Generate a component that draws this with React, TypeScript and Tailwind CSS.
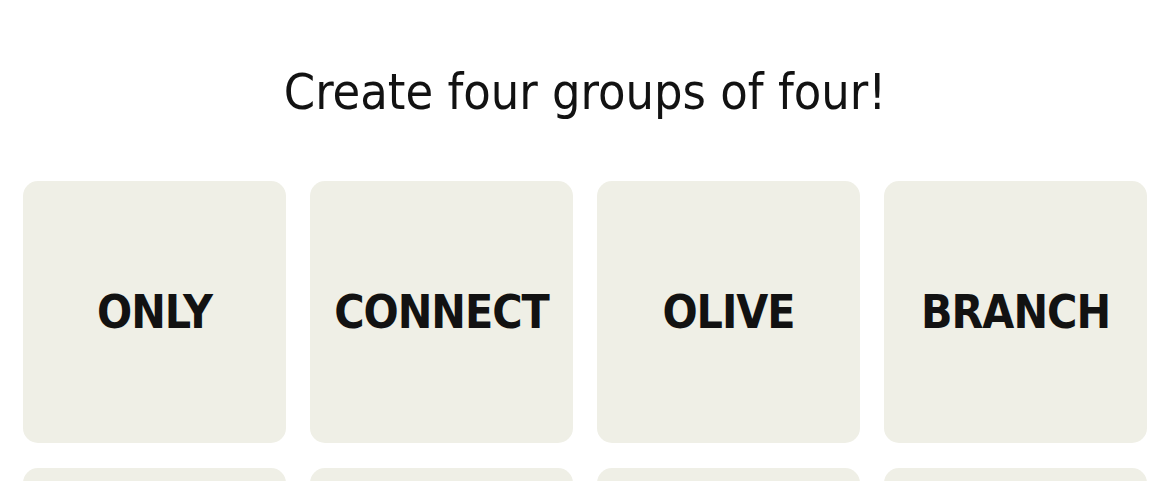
const words = ["ONLY", "CONNECT", "OLIVE", "BRANCH", "PEACH", "STAR", "LEAF", "ROOT"]

export default function App() {
  return (
    <div className="min-h-screen bg-white px-[23px] font-['DejaVu_Sans_Condensed','Liberation_Sans',sans-serif] text-[#121212]">
      <h1 className="pt-[59px] text-center text-[50px] leading-[66px] font-normal">
        Create four groups of four!
      </h1>
      <div className="mt-[56px] grid grid-cols-4 gap-x-6 gap-y-[25px]">
        {words.map((w) => (
          <button
            key={w}
            className="flex h-[262px] items-center justify-center rounded-[15px] bg-[#efefe6] text-[46px] font-bold tracking-[-1px]"
          >
            {w}
          </button>
        ))}
      </div>
    </div>
  )
}
